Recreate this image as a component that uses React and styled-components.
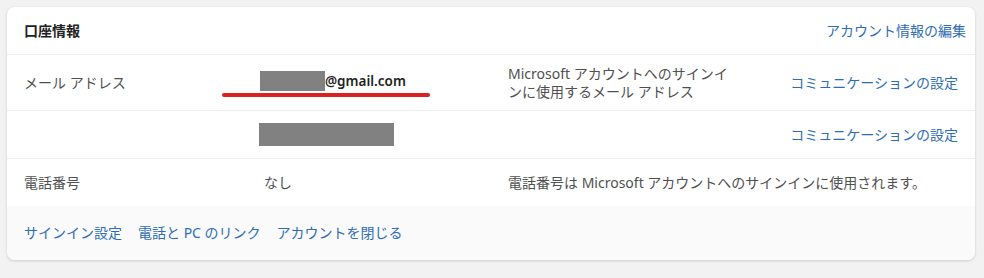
import styled, { createGlobalStyle } from 'styled-components';

const GlobalStyle = createGlobalStyle`
  html, body {
    margin: 0;
    background: #f2f2f2;
  }
  body {
    padding: 7px 9px 7px 7px;
    font-family: "Noto Sans", "Noto Sans CJK JP", sans-serif;
    font-size: 14px;
    color: #505050;
  }
`;

const Card = styled.section`
  width: 968px;
  background: #fff;
  border-radius: 8px;
  box-shadow: 0 1px 3px rgba(0, 0, 0, 0.16);
  overflow: hidden;
`;

const Header = styled.header`
  height: 47px;
  display: flex;
  align-items: center;
  justify-content: space-between;
  padding: 0 9px 0 17px;
  border-bottom: 1px solid #ededed;
`;

const Title = styled.h2`
  margin: 0 0 1px;
  font-size: 14px;
  font-weight: 700;
  color: #222;
`;

const TextLink = styled.a`
  color: #2f6db5;
  text-decoration: none;
  white-space: nowrap;
  line-height: 18px;
`;

const Row = styled.div`
  height: ${(p) => p.$h}px;
  display: grid;
  grid-template-columns: 235px 249px 1fr auto;
  align-items: center;
  padding: 0 17px;
  border-bottom: ${(p) => (p.$last ? 'none' : '1px solid #ededed')};
  box-sizing: border-box;
`;

const Label = styled.div`
  line-height: 18px;
`;

const Value = styled.div`
  line-height: 18px;
  padding-left: ${(p) => p.$indent || 0}px;
`;

const Desc = styled.div`
  line-height: 18px;
  max-width: ${(p) => (p.$narrow ? '232px' : 'none')};
  grid-column: ${(p) => (p.$wide ? '3 / 5' : 'auto')};
`;

const Email = styled.span`
  position: relative;
  display: inline-flex;
  align-items: center;
  margin-left: 1px;
  font-size: 13.5px;
  font-weight: 600;
  color: #222;
`;

const Redacted = styled.span`
  display: inline-block;
  width: ${(p) => p.$w}px;
  height: ${(p) => p.$h}px;
  background: #818181;
  vertical-align: middle;
`;

const Underline = styled.span`
  position: absolute;
  left: -38px;
  top: 22px;
  width: 208px;
  height: 4px;
  border-radius: 2px;
  background: #dc1f1f;
`;

const Footer = styled.footer`
  height: 54px;
  display: flex;
  align-items: center;
  gap: 16px;
  padding: 0 17px;
  background: #fafafa;
`;

export default function App() {
  return (
    <>
      <GlobalStyle />
      <Card>
        <Header>
          <Title>口座情報</Title>
          <TextLink href="#">アカウント情報の編集</TextLink>
        </Header>

        <Row $h={56}>
          <Label>メール アドレス</Label>
          <Value>
            <Email>
              <Redacted $w={65} $h={20} />
              @gmail.com
              <Underline />
            </Email>
          </Value>
          <Desc $narrow>Microsoft アカウントへのサインインに使用するメール アドレス</Desc>
          <TextLink href="#">コミュニケーションの設定</TextLink>
        </Row>

        <Row $h={48}>
          <Label />
          <Value>
            <Redacted $w={135} $h={23} />
          </Value>
          <Desc />
          <TextLink href="#">コミュニケーションの設定</TextLink>
        </Row>

        <Row $h={47} $last>
          <Label>電話番号</Label>
          <Value $indent={5}>なし</Value>
          <Desc $wide>電話番号は Microsoft アカウントへのサインインに使用されます。</Desc>
        </Row>

        <Footer>
          <TextLink href="#">サインイン設定</TextLink>
          <TextLink href="#">電話と PC のリンク</TextLink>
          <TextLink href="#">アカウントを閉じる</TextLink>
        </Footer>
      </Card>
    </>
  );
}
